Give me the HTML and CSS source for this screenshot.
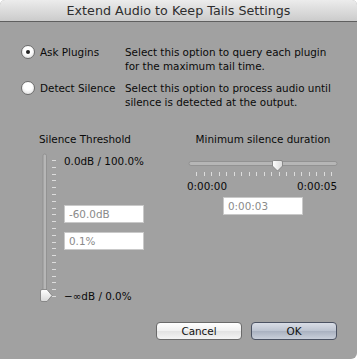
FILE: index.html
```html
<!DOCTYPE html>
<html lang="en">
<head>
    <meta charset="UTF-8">
    <title>Extend Audio to Keep Tails Settings</title>
    <link rel="stylesheet" href="styles.css">
</head>
<body>
    <div class="window">
        <div class="titleBar">Extend Audio to Keep Tails Settings</div>
        <div class="content">
            <div class="options">
                <div class="option">
                    <span class="radio checked"></span>
                    <span class="optionName">Ask Plugins</span>
                </div>
                <p class="optionDesc">Select this option to query each plugin<br>for the maximum tail time.</p>
                <div class="option">
                    <span class="radio"></span>
                    <span class="optionName">Detect Silence</span>
                </div>
                <p class="optionDesc">Select this option to process audio until<br>silence is detected at the output.</p>
            </div>

            <div class="panels">
                <div class="threshold">
                    <div class="panelTitle">Silence Threshold</div>
                    <div class="thresholdBody">
                        <svg class="vSlider" width="26" height="152" viewBox="0 0 26 152">
                            <defs>
                                <linearGradient id="vThumb" x1="0" y1="0" x2="0" y2="1">
                                    <stop offset="0" stop-color="#ffffff"/>
                                    <stop offset="1" stop-color="#d8d8d8"/>
                                </linearGradient>
                            </defs>
                            <rect x="9" y="2" width="3.5" height="142" rx="1.75" fill="#b6b6b6" stroke="#8c8c8c" stroke-width="0.8"/>
                            <g id="vTicks" stroke="#dcdcdc" stroke-width="1"></g>
                            <path d="M8 137.5 H13 L18 143.5 L13 149.5 H8 Q6.5 149.5 6.5 148 V139 Q6.5 137.5 8 137.5 Z" fill="url(#vThumb)" stroke="#7a7a7a" stroke-width="0.8"/>
                        </svg>
                        <div class="thresholdValues">
                            <div class="valueTop">0.0dB / 100.0%</div>
                            <input class="field fieldDb" type="text" value="-60.0dB">
                            <input class="field fieldPct" type="text" value="0.1%">
                            <div class="valueBottom">−∞dB / 0.0%</div>
                        </div>
                    </div>
                </div>

                <div class="duration">
                    <div class="panelTitle center">Minimum silence duration</div>
                    <svg class="hSlider" width="154" height="22" viewBox="0 0 154 22">
                        <defs>
                            <linearGradient id="hThumb" x1="0" y1="0" x2="1" y2="0">
                                <stop offset="0" stop-color="#ffffff"/>
                                <stop offset="1" stop-color="#dadada"/>
                            </linearGradient>
                        </defs>
                        <rect x="3" y="5.5" width="148" height="4" rx="2" fill="#b6b6b6" stroke="#8c8c8c" stroke-width="0.8"/>
                        <g id="hTicks" stroke="#dcdcdc" stroke-width="1"></g>
                        <path d="M87.5 4.5 H95 Q96.5 4.5 96.5 6 V10 L91.5 15 L86.5 10 V6 Q86.5 4.5 87.5 4.5 Z" fill="url(#hThumb)" stroke="#7a7a7a" stroke-width="0.8"/>
                    </svg>
                    <div class="rangeLabels">
                        <span>0:00:00</span>
                        <span>0:00:05</span>
                    </div>
                    <input class="field fieldTime" type="text" value="0:00:03">
                </div>
            </div>

            <div class="buttons">
                <button class="btn">Cancel</button>
                <button class="btn btnDefault">OK</button>
            </div>
        </div>
    </div>
    <script>
        // tick marks for both sliders
        const ns = 'http://www.w3.org/2000/svg'
        const vTicks = document.querySelector('#vTicks')
        for (let i = 0; i < 21; i++) {
            const y = Math.round(8 + i * 6.8) + 0.5
            const line = document.createElementNS(ns, 'line')
            line.setAttribute('x1', 18)
            line.setAttribute('x2', 22)
            line.setAttribute('y1', y)
            line.setAttribute('y2', y)
            vTicks.appendChild(line)
        }
        const hTicks = document.querySelector('#hTicks')
        for (let i = 0; i < 19; i++) {
            const x = Math.round(10 + i * 7.5) + 0.5
            const line = document.createElementNS(ns, 'line')
            line.setAttribute('x1', x)
            line.setAttribute('x2', x)
            line.setAttribute('y1', 16)
            line.setAttribute('y2', 20)
            hTicks.appendChild(line)
        }
    </script>
</body>
</html>
```

FILE: styles.css
```css
html, body {
    margin: 0;
    padding: 0;
    background-color: #ffffff;
}

.window {
    width: 357px;
    height: 359px;
    background-color: #a1a1a1;
    border-radius: 5px 5px 6px 0;
    overflow: hidden;
    font-family: "DejaVu Sans", sans-serif;
    font-size: 10.4px;
    color: #0a0a0a;
}

.titleBar {
    height: 21px;
    line-height: 22px;
    text-align: center;
    font-size: 12.7px;
    color: #2e2e2e;
    background: linear-gradient(#ececec, #cbcbcb);
    border-bottom: 1px solid #5f5f5f;
}

.content {
    display: flex;
    flex-direction: column;
}

.options {
    display: grid;
    grid-template-columns: 104px 1fr;
    row-gap: 8px;
    margin-top: 23px;
    padding-left: 21px;
    line-height: 14px;
}

.option {
    display: flex;
    align-items: center;
    gap: 5px;
    height: 14px;
}

.radio {
    width: 14px;
    height: 14px;
    border-radius: 50%;
    border: 1px solid #6d6d6d;
    background: radial-gradient(circle at 50% 35%, #ffffff 40%, #d6d6d6 100%);
    box-sizing: border-box;
    display: grid;
    place-items: center;
}

.radio.checked::after {
    content: "";
    width: 4px;
    height: 4px;
    border-radius: 50%;
    background-color: #222;
}

.optionDesc {
    margin: 0;
}

.panels {
    display: flex;
    margin-top: 23px;
    line-height: 14px;
}

.threshold {
    width: 152px;
    margin-left: 34px;
}

.panelTitle {
    padding-left: 5px;
}

.panelTitle.center {
    padding-left: 0;
    text-align: center;
}

.thresholdBody {
    display: flex;
    margin-top: 6px;
    gap: 4px;
}

.vSlider,
.hSlider {
    display: block;
}

.thresholdValues {
    display: flex;
    flex-direction: column;
    align-items: flex-start;
}

.valueTop {
    margin-top: 2px;
}

.field {
    box-sizing: border-box;
    height: 18px;
    border: 1px solid #c9c9c9;
    background-color: #fff;
    font-family: "DejaVu Sans", sans-serif;
    font-size: 10.4px;
    color: #8a8a8a;
    padding: 0 4px;
    outline: none;
}

.fieldDb {
    width: 80px;
    margin-top: 37px;
}

.fieldPct {
    width: 80px;
    margin-top: 9px;
}

.valueBottom {
    margin-top: 39px;
}

.duration {
    width: 154px;
    display: flex;
    flex-direction: column;
    align-items: center;
}

.hSlider {
    margin-top: 10px;
}

.rangeLabels {
    width: 150px;
    margin-left: -2px;
    margin-top: 1px;
    display: flex;
    justify-content: space-between;
}

.fieldTime {
    width: 80px;
    margin-top: 4px;
}

.buttons {
    display: flex;
    justify-content: flex-end;
    gap: 9px;
    padding-right: 20px;
    margin-top: 18px;
}

.btn {
    width: 86px;
    height: 18px;
    padding: 0;
    border: 1px solid #6a6a6a;
    border-radius: 4px;
    background: linear-gradient(#ffffff, #f0f0f0 50%, #e2e2e2 51%, #f4f4f4);
    font-family: "DejaVu Sans", sans-serif;
    font-size: 10.4px;
    color: #111;
}

.btnDefault {
    border-color: #4b5262;
    background: linear-gradient(#d9dde6, #bcc3d0 50%, #a9b1c0 51%, #c9cfda);
}
```
